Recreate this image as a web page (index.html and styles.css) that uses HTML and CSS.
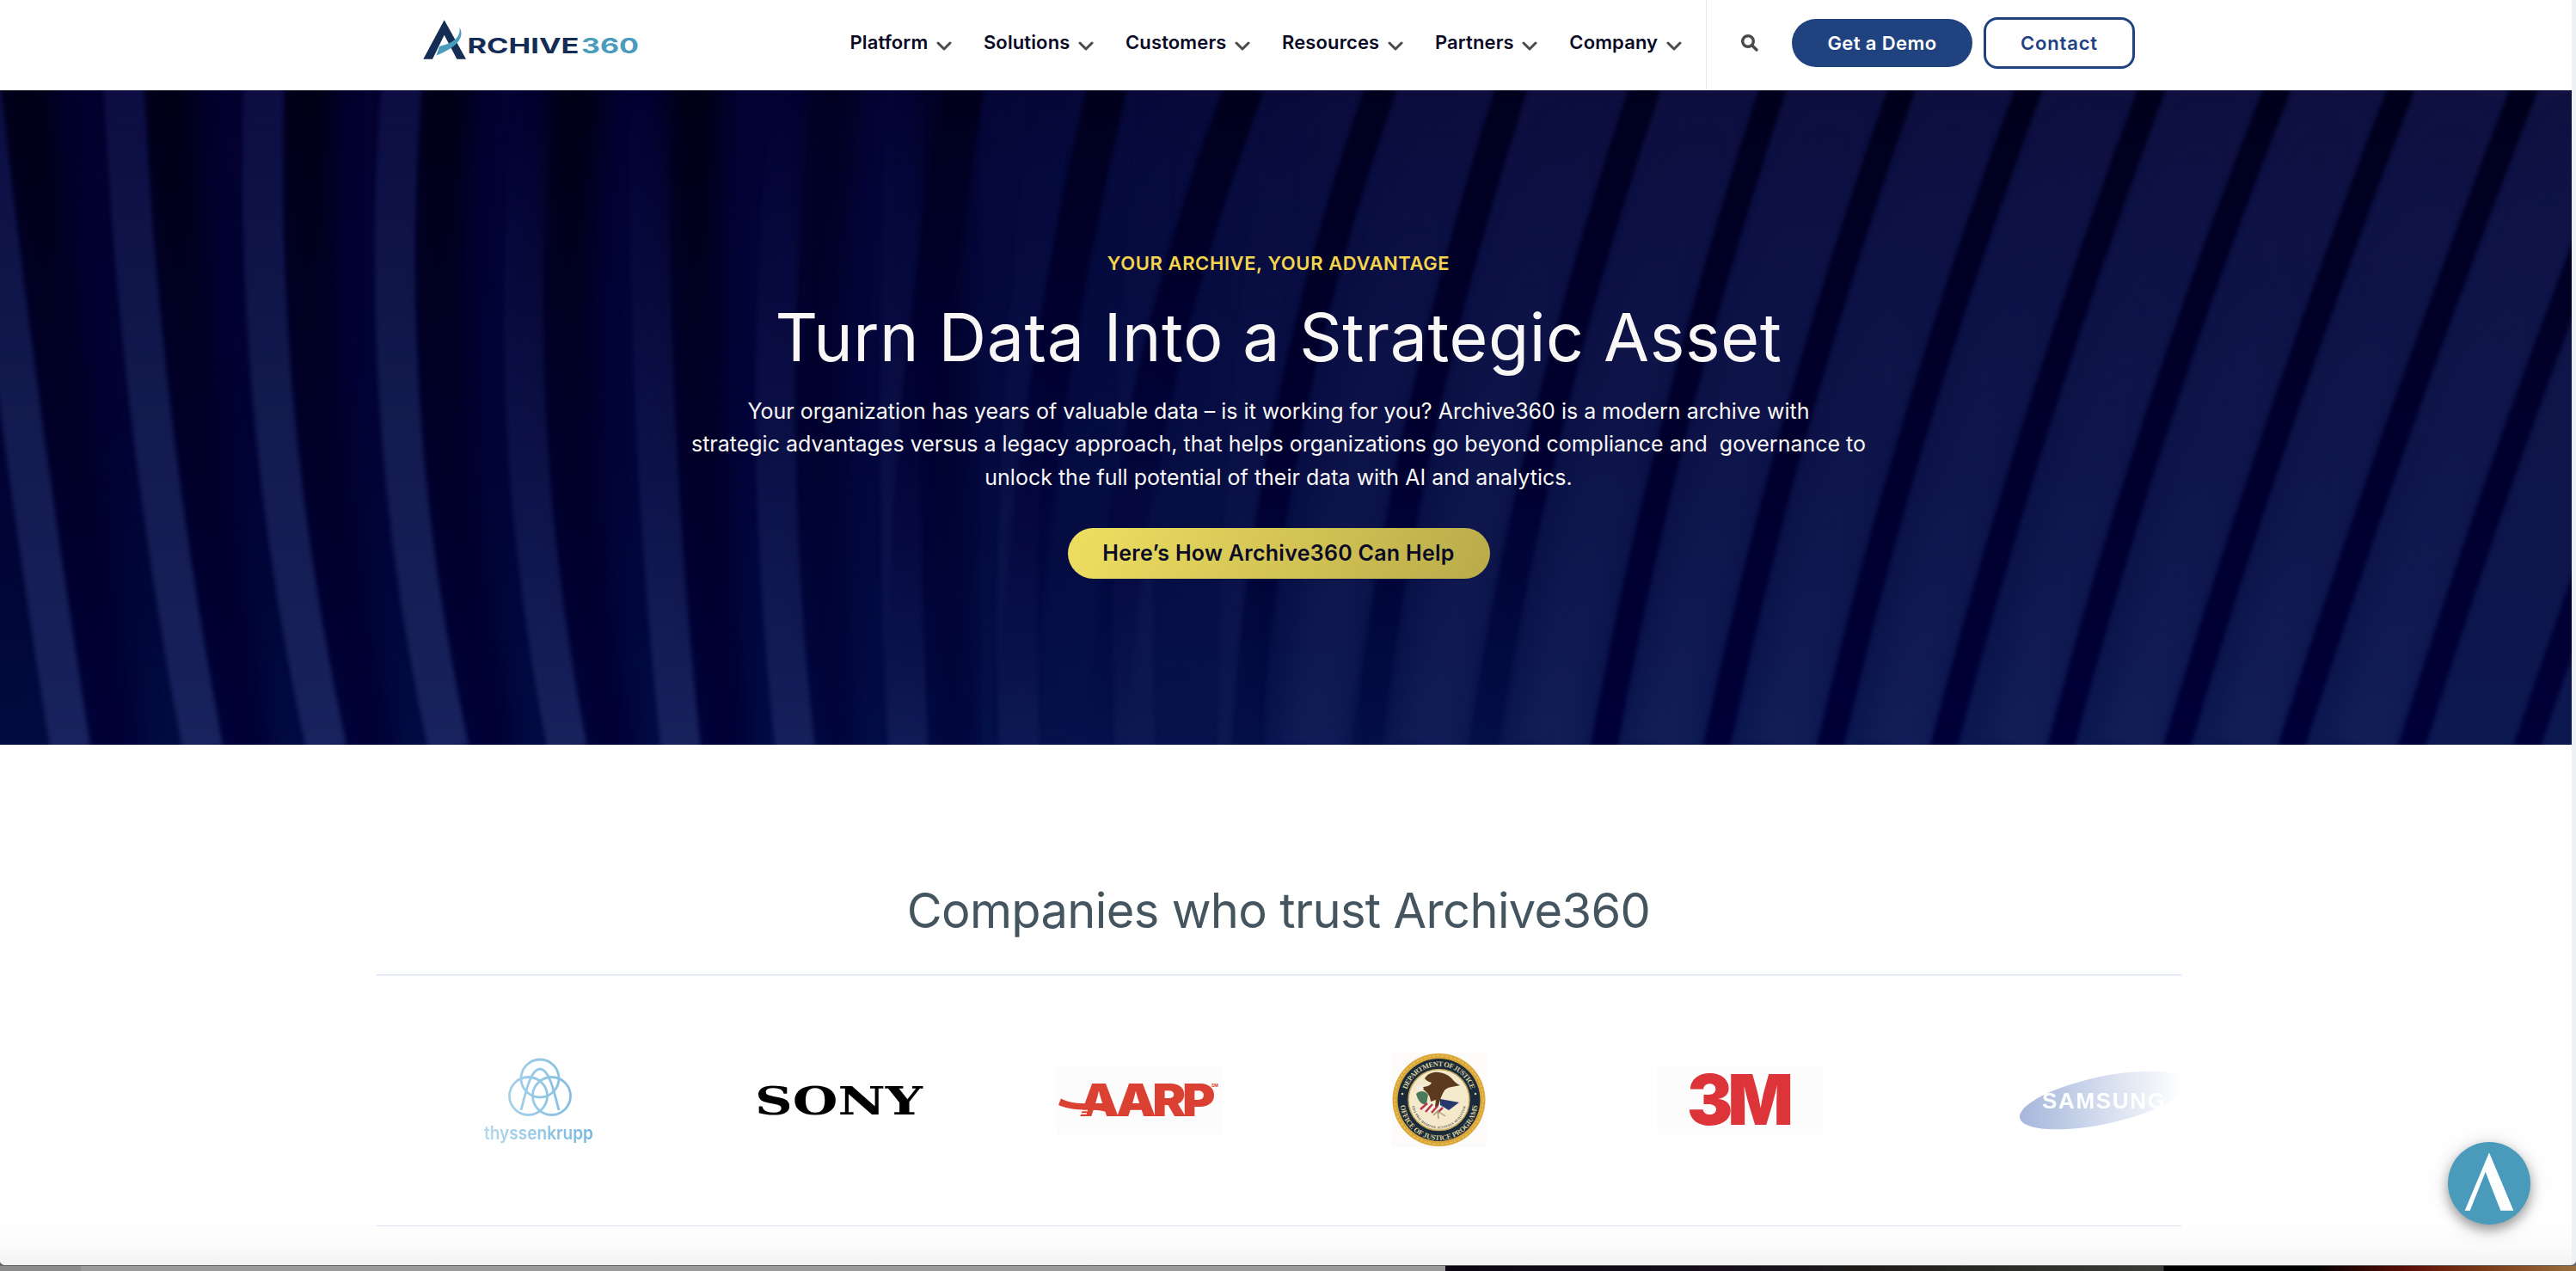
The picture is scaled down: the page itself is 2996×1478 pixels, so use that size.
FILE: index.html
```html
<!DOCTYPE html>
<html lang="en">
<head>
<meta charset="utf-8">
<title>Archive360</title>
<link rel="stylesheet" href="styles.css">
</head>
<body>
<div class="window">
  <div class="page">
    <header class="header">
      <svg class="brand" viewBox="492 20 252 52" width="252" height="52" role="img" aria-label="Archive360">
        <path d="M516.7 23.3 L542 68.8 H531.4 L516.7 40.7 L503 68.8 H492.3 Z" fill="#152c54"/>
        <path d="M534.5 32 C540 41 535 54 507.5 64.5 L511 54 C525 50.500 536 45 534.500 32 Z" fill="#4a9cbc"/>
        <text class="brand-text" x="543.500" y="62" textLength="130" lengthAdjust="spacingAndGlyphs" fill="#152c54">RCHIVE</text>
        <text class="brand-text" x="676" y="62" textLength="67" lengthAdjust="spacingAndGlyphs" fill="#4a9cbc">360</text>
      </svg>
      <nav class="nav">
        <a class="nav-item">Platform<svg class="chevron" viewBox="0 0 18 11"><path d="M2 2 L9 9 L16 2"/></svg></a>
        <a class="nav-item">Solutions<svg class="chevron" viewBox="0 0 18 11"><path d="M2 2 L9 9 L16 2"/></svg></a>
        <a class="nav-item">Customers<svg class="chevron" viewBox="0 0 18 11"><path d="M2 2 L9 9 L16 2"/></svg></a>
        <a class="nav-item">Resources<svg class="chevron" viewBox="0 0 18 11"><path d="M2 2 L9 9 L16 2"/></svg></a>
        <a class="nav-item">Partners<svg class="chevron" viewBox="0 0 18 11"><path d="M2 2 L9 9 L16 2"/></svg></a>
        <a class="nav-item">Company<svg class="chevron" viewBox="0 0 18 11"><path d="M2 2 L9 9 L16 2"/></svg></a>
      </nav>
      <div class="actions">
        <svg class="search" viewBox="0 0 20 20"><circle cx="8" cy="8" r="6.300"/><path d="M12.500 12.500 L18 18"/></svg>
        <a class="btn btn-demo">Get a Demo</a>
        <a class="btn btn-contact">Contact</a>
      </div>
    </header>

    <section class="hero">
      <svg class="hero-art" viewBox="0 0 2991 761" preserveAspectRatio="none" aria-hidden="true">
        <defs>
          <linearGradient id="base"><stop offset="0" stop-color="#010030"/><stop offset=".3" stop-color="#020238"/><stop offset=".42" stop-color="#050a40"/><stop offset=".58" stop-color="#0d1146"/><stop offset="1" stop-color="#11154a"/></linearGradient>
          <linearGradient id="shade" x2="0" y2="1"><stop offset="0" stop-color="#08001a" stop-opacity=".2"/><stop offset=".45" stop-color="#001040" stop-opacity=".1"/><stop offset="1" stop-color="#04205e" stop-opacity=".35"/></linearGradient>
          <linearGradient id="lit" gradientUnits="userSpaceOnUse" x1="0" y1="0" x2="0" y2="761"><stop offset="0" stop-color="#0c0d42"/><stop offset=".45" stop-color="#12194d"/><stop offset="1" stop-color="#18225c"/></linearGradient>
          <linearGradient id="litlow" gradientUnits="userSpaceOnUse" x1="0" y1="0" x2="0" y2="761"><stop offset="0" stop-color="#10124a" stop-opacity="0"/><stop offset=".4" stop-color="#12184e" stop-opacity=".5"/><stop offset="1" stop-color="#18225c"/></linearGradient>
          <linearGradient id="dark" gradientUnits="userSpaceOnUse" x1="0" y1="0" x2="0" y2="761"><stop offset="0" stop-color="#000016"/><stop offset=".5" stop-color="#000026"/><stop offset="1" stop-color="#000036"/></linearGradient>
          <linearGradient id="darktop" gradientUnits="userSpaceOnUse" x1="0" y1="0" x2="0" y2="761"><stop offset="0" stop-color="#00001c"/><stop offset=".4" stop-color="#000030" stop-opacity=".9"/><stop offset=".75" stop-color="#000038" stop-opacity=".35"/><stop offset="1" stop-color="#000038" stop-opacity="0"/></linearGradient>
          <linearGradient id="band" gradientUnits="userSpaceOnUse" x1="0" y1="0" x2="0" y2="761"><stop offset="0" stop-color="#00001c"/><stop offset=".5" stop-color="#00002c"/><stop offset="1" stop-color="#000038"/></linearGradient>
          <linearGradient id="bandfade" gradientUnits="userSpaceOnUse" x1="0" y1="0" x2="0" y2="761"><stop offset="0" stop-color="#00001e"/><stop offset=".6" stop-color="#000032"/><stop offset="1" stop-color="#000a40" stop-opacity=".6"/></linearGradient>
          <filter id="soft" x="-20%" width="140%" color-interpolation-filters="sRGB"><feGaussianBlur stdDeviation="14 2"/></filter>
          <filter id="edge" x="-20%" width="140%" color-interpolation-filters="sRGB"><feGaussianBlur stdDeviation="2.500"/></filter>
        </defs>
        <rect width="2991" height="761" fill="url(#base)"/>
        <rect width="2991" height="761" fill="url(#shade)"/>
        <g fill="none" stroke="url(#dark)" stroke-width="62" filter="url(#soft)">
          <path d="M28 -5 Q71 380 133 766"/><path d="M195 -5 Q213 380 287 766"/><path d="M358 -5 Q345 380 431 766"/><path d="M518 -5 Q488 380 573 766"/><path d="M672 -5 Q633 380 711 766"/><path d="M808 -5 Q800 380 843 766"/>
        </g>
        <g fill="none" stroke="url(#dark)" stroke-width="56" opacity=".6" filter="url(#soft)"><path d="M972 -5 Q928 380 975 766"/><path d="M1100 -5 Q1090 380 1110 766"/></g>
        <g fill="none" stroke="url(#lit)" stroke-width="47" filter="url(#edge)">
          <path d="M-23 -5 Q20 380 82 766"/><path d="M144 -5 Q162 380 236 766"/><path d="M307 -5 Q295 380 380 766"/><path d="M467 -5 Q437 380 522 766"/>
        </g>
        <g fill="none" stroke="url(#litlow)" stroke-width="46" filter="url(#edge)">
          <path d="M622 -5 Q583 380 660 766"/><path d="M757 -5 Q750 380 792 766"/><path d="M922 -5 Q880 380 925 766" opacity=".9"/><path d="M1055 -5 Q1039 380 1056 766" opacity=".7"/><path d="M1225 -5 Q1175 380 1185 766" opacity=".55"/><path d="M1350 -5 Q1310 380 1320 766" opacity=".45"/><path d="M1500 -5 Q1440 380 1440 766" opacity=".35"/>
        </g>
        <g fill="none" stroke="url(#litlow)" stroke-width="70" opacity=".6" filter="url(#soft)">
          <path d="M1694 0 Q1570 380 1526 761"/><path d="M1846 0 Q1722 380 1663 761"/><path d="M1996 0 Q1868 380 1800 761"/><path d="M2142 0 Q2014 380 1933 761"/><path d="M2290 0 Q2152 380 2070 761"/><path d="M2438 0 Q2290 380 2206 761"/><path d="M2583 0 Q2438 380 2344 761"/><path d="M2728 0 Q2576 380 2476 761"/><path d="M2870 0 Q2720 380 2610 761"/><path d="M3015 0 Q2864 380 2746 761"/>
        </g>
        <g fill="none" stroke="url(#darktop)" stroke-width="46" filter="url(#edge)">
          <path d="M1122 -5 Q1054 380 1050 766"/><path d="M1288 -5 Q1196 380 1180 766"/><path d="M1448 -5 Q1301 380 1290 766"/>
        </g>
        <g fill="none" stroke="url(#bandfade)" stroke-width="36" filter="url(#edge)">
          <path d="M1607 -5 Q1471 380 1450 766"/><path d="M1759 -5 Q1634 380 1590 766"/><path d="M1914 -5 Q1784 380 1725 766"/>
        </g>
        <g fill="none" stroke="url(#band)" stroke-width="31" filter="url(#edge)">
          <path d="M2063 -5 Q1936 380 1865 766"/><path d="M2213 -5 Q2077 380 1996 766"/><path d="M2361 -5 Q2217 380 2128 766"/><path d="M2504 -5 Q2360 380 2260 766"/><path d="M2650 -5 Q2497 380 2396 766"/><path d="M2794 -5 Q2645 380 2531 766"/><path d="M2937 -5 Q2787 380 2664 766"/><path d="M3080 -5 Q2924 380 2804 766"/><path d="M3226 -5 Q3068 380 2938 766"/>
        </g>
      </svg>
      <div class="hero-copy">
        <p class="eyebrow">YOUR ARCHIVE, YOUR ADVANTAGE</p>
        <h1 class="hero-title">Turn Data Into a Strategic Asset</h1>
        <p class="hero-text">Your organization has years of valuable data – is it working for you? Archive360 is a modern archive with<br>strategic advantages versus a legacy approach, that helps organizations go beyond compliance and&nbsp; governance to<br>unlock the full potential of their data with AI and analytics.</p>
        <a class="hero-cta">Here’s How Archive360 Can Help</a>
      </div>
    </section>

    <section class="trust">
      <h2 class="trust-title">Companies who trust Archive360</h2>
      <div class="logos">
        <div class="slide">
          <svg viewBox="557 1226 140 110" width="140" height="110" role="img">
            <g fill="none" stroke="#2f90cc" stroke-width="2.800"><circle cx="628" cy="1254" r="22"/><circle cx="614.500" cy="1274.500" r="22"/><circle cx="641.500" cy="1274.500" r="22"/><path d="M606 1291 C611 1272 617 1243 628 1243 C639 1243 645 1272 650 1291"/></g>
            <text class="thyssen" x="563" y="1325" textLength="127" lengthAdjust="spacingAndGlyphs">thyssenkrupp</text>
          </svg>
        </div>
        <div class="slide">
          <svg viewBox="871 1240 210 77" width="210" height="77" role="img"><text class="sony" x="878" y="1294.500" textLength="195" lengthAdjust="spacingAndGlyphs">SONY</text></svg>
        </div>
        <div class="slide">
          <svg viewBox="1230 1239 192 80" width="192" height="80" role="img">
            <rect x="1230" y="1239" width="192" height="80" fill="#fdfcfc"/>
            <text class="aarp" x="1256" y="1298" textLength="154" lengthAdjust="spacingAndGlyphs">AARP</text>
            <path d="M1235 1277.500 C1247 1284 1262 1283 1276 1284 C1284 1285 1289 1288 1291 1294 C1282 1291 1276 1290 1266 1290.500 C1250 1291 1239 1288 1232 1285 Z" fill="#db4132"/>
            <path d="M1250 1291.500 H1266 M1249 1295 H1265" stroke="#fdfcfc" stroke-width="1.500"/>
            <text class="aarp-mark" x="1410" y="1264">SM</text>
          </svg>
        </div>
        <div class="slide">
          <svg viewBox="1620 1224 110 110" width="110" height="110" role="img">
            <defs>
              <path id="arcTop" d="M1635.500 1279 A39 39 0 0 1 1713.500 1279"/>
              <path id="arcBottom" d="M1629.500 1281 A45 45 0 0 0 1719.500 1281"/>
              <path id="arcInner" d="M1643 1281 A31.500 31.500 0 0 0 1706 1281"/>
            </defs>
            <rect x="1620" y="1224" width="110" height="110" fill="#fcfbfa"/>
            <circle cx="1674.500" cy="1279" r="54" fill="#d9a63a"/>
            <circle cx="1674.500" cy="1279" r="51.500" fill="none" stroke="#e6bb50" stroke-width="2" stroke-dasharray="3 2"/>
            <circle cx="1674.500" cy="1279" r="48" fill="#1b2a3a"/>
            <circle cx="1674.500" cy="1279" r="35.500" fill="#f5e9cb" stroke="#c3a85a" stroke-width="1.500"/>
            <text class="seal-text"><textPath href="#arcTop" startOffset="50%" text-anchor="middle" textLength="98">DEPARTMENT OF JUSTICE</textPath></text>
            <text class="seal-text"><textPath href="#arcBottom" startOffset="50%" text-anchor="middle" textLength="132">OFFICE OF JUSTICE PROGRAMS</textPath></text>
            <text class="seal-motto"><textPath href="#arcInner" startOffset="50%" text-anchor="middle" textLength="88">QUI PRO DOMINA JUSTITIA SEQUITUR</textPath></text>
            <circle cx="1632" cy="1272" r="1.300" fill="#d9cf9c"/><circle cx="1717" cy="1272" r="1.300" fill="#d9cf9c"/>
            <path d="M1648 1272 C1652 1268 1658 1268 1662 1273 L1660 1284 C1654 1285 1650 1280 1648 1272Z" fill="#4a7a5c"/>
            <path d="M1651 1286 L1668 1282 L1684 1288 L1678 1293 L1660 1294 Z" fill="#f4efe8"/>
            <path d="M1653 1290 L1661 1283 M1659 1293 L1667 1284 M1666 1294 L1673 1286 M1673 1294 L1679 1288" stroke="#b63b42" stroke-width="2.600"/>
            <path d="M1676 1278 L1698 1282 L1686 1291 L1676 1285 Z" fill="#27386f"/>
            <path d="M1658 1254 C1664 1244 1677 1246 1684 1250 C1690 1253 1692 1259 1699 1262 C1691 1264 1684 1264 1681 1268 C1678 1273 1676 1278 1674 1286 L1670 1287 L1671 1279 L1665 1281 C1664 1272 1660 1270 1654 1265 C1658 1263 1664 1264 1666 1259 C1663 1258 1660 1257 1658 1254 Z" fill="#5b3a1e"/>
            <path d="M1648 1264 L1655 1262 L1657 1266 L1651 1269 Z" fill="#f2efe9"/>
            <path d="M1668 1297 L1673 1292 L1674 1301 M1673 1292 L1682 1298" fill="none" stroke="#a89a7a" stroke-width="1.500"/>
          </svg>
        </div>
        <div class="slide">
          <svg viewBox="1927 1229 193 100" width="193" height="100" role="img">
            <rect x="1927" y="1239" width="193" height="80" fill="#fdfcfc"/>
            <text class="mmm" x="1962" y="1308" textLength="118" lengthAdjust="spacingAndGlyphs">3M</text>
          </svg>
        </div>
        <div class="slide slide-last">
          <svg viewBox="2343 1239 204 80" width="204" height="80" role="img">
            <ellipse cx="2446" cy="1279.500" rx="99" ry="27.500" transform="rotate(-12 2446 1279.500)" fill="#4a6db8"/>
            <text class="samsung" x="2375" y="1289" textLength="143" lengthAdjust="spacing">SAMSUNG</text>
          </svg>
        </div>
      </div>
    </section>
    <a class="chat" aria-label="Chat">
      <svg viewBox="2847 1328 96 96" width="96" height="96"><path d="M2895 1340.300 L2923.300 1407.700 H2908.300 L2890.700 1362.700 L2872.700 1407.700 H2866.700 Z" fill="#fff"/></svg>
    </a>
  </div>
  <div class="scrollbar"></div>
</div>
<div class="desktop"></div>
</body>
</html>
```
FILE: styles.css
```css
* { box-sizing: border-box; }

body {
  margin: 0;
  height: 1478px;
  display: flex;
  flex-direction: column;
  overflow: hidden;
  background: #666;
  font-family: Inter, "Liberation Sans", sans-serif;
}

h1, h2, p { margin: 0; font-weight: 400; }

.window {
  display: flex;
  height: 1472px;
  overflow: hidden;
  border-radius: 0 0 6px 6px;
  border-bottom: 1px solid #6d6d6d;
}

.page {
  position: relative;
  flex: 1;
  display: flex;
  flex-direction: column;
  background: #fff;
}

.scrollbar { width: 5px; background: #eef0f4; }

.desktop {
  flex: 1;
  background: linear-gradient(90deg, #8b8b8b 0 94px, #9a9a9a 94px 1681px, #0a0712 1681px, #150d1c 2000px, #1b1a19 2150px, #3b3b38 2516px, #000 2517px, #000 2690px, #5c0e06 2800px, #7a3a18 2890px, #9a6e3c 2996px);
}

/* Header */
.header {
  display: flex;
  align-items: center;
  height: 105px;
  padding: 0 508px 5px 492px;
  color: #0b0a26;
  font-size: 22px;
  font-weight: 600;
}

.brand { margin-bottom: 8px; }
.brand-text { font: 700 24.5px Inter, sans-serif; }

.nav { display: flex; gap: 37.1px; margin-left: 244.5px; letter-spacing: .12px; }
.nav-item {
  display: flex;
  align-items: center;
  gap: 9.5px;
  line-height: 28px;
  padding-bottom: 2px;
}

.chevron {
  width: 18px;
  height: 11px;
  margin-top: 8px;
  fill: none;
  stroke: #4a4a4a;
  stroke-width: 3;
  stroke-linecap: round;
  stroke-linejoin: round;
}

.actions {
  display: flex;
  align-items: center;
  height: 105px;
  margin: 0 0 -5px auto;
  padding: 0 0 5px 40px;
  border-left: 1px solid #e9e9ec;
}

.search {
  width: 20px;
  height: 20px;
  margin-right: 39px;
  fill: none;
  stroke: #4a4a4a;
  stroke-width: 3.4;
  stroke-linecap: round;
}

.btn { display: flex; align-items: center; justify-content: center; padding-bottom: 1px; }
.btn-demo {
  width: 210px;
  height: 56px;
  margin-right: 13px;
  border-radius: 28px;
  background: #20427f;
  color: #fff;
  letter-spacing: .4px;
}
.btn-contact {
  width: 176px;
  height: 60px;
  border: 3px solid #20427f;
  border-radius: 16px;
  color: #20427f;
  letter-spacing: .8px;
}

/* Hero */
.hero {
  position: relative;
  height: 761px;
  padding: 186px 17px 0 0;
  overflow: hidden;
  background: #05083a;
}

.hero-art { position: absolute; top: 0; left: 0; width: 100%; height: 100%; }

.hero-copy {
  position: relative;
  display: flex;
  flex-direction: column;
  align-items: center;
  color: #f9f7f5;
  text-align: center;
}

.eyebrow {
  color: #f4d54d;
  font-size: 22px;
  font-weight: 600;
  line-height: 30px;
  letter-spacing: .6px;
}

.hero-title { margin-top: 25px; font-size: 77px; line-height: 92px; letter-spacing: .6px; }

.hero-text { margin-top: 20.6px; font-size: 25px; line-height: 38.6px; white-space: nowrap; }

.hero-cta {
  display: flex;
  align-items: center;
  justify-content: center;
  width: 491px;
  height: 59px;
  margin-top: 39.6px;
  padding-bottom: 1px;
  border-radius: 30px;
  background: linear-gradient(115deg, #eedf62, #b9ab49);
  color: #0b0a26;
  font-size: 25px;
  font-weight: 600;
  letter-spacing: .28px;
}

/* Customer logos */
.trust {
  flex: 1;
  display: flex;
  flex-direction: column;
  align-items: center;
  padding: 158px 17px 0 0;
  background: linear-gradient(0deg, #f3f3f3, #fafafa 20px, #fff 50px);
}

.trust-title {
  color: #455560;
  font-size: 56px;
  line-height: 70px;
  letter-spacing: -.65px;
}

.logos {
  display: flex;
  width: 2099px;
  height: 293px;
  margin-top: 39px;
  padding-left: 14.5px;
  overflow: hidden;
  background: linear-gradient(#dbe4f7, #dbe4f7) top / 100% 1.5px no-repeat, linear-gradient(#dbe4f7, #dbe4f7) bottom / 100% 1.5px no-repeat;
}

.slide {
  flex: none;
  display: flex;
  align-items: center;
  justify-content: center;
  width: 349.2px;
  padding-bottom: 1px;
}
.slide:first-child {
  padding-top: 4px;
  -webkit-mask: linear-gradient(90deg, rgba(0,0,0,.1), #000 390px);
  mask: linear-gradient(90deg, rgba(0,0,0,.1), #000 390px);
}
.slide-last {
  margin-left: 72px;
  -webkit-mask: linear-gradient(90deg, rgba(0,0,0,.7), transparent 267px);
  mask: linear-gradient(90deg, rgba(0,0,0,.7), transparent 267px);
}

.thyssen { font: 600 21px Inter, sans-serif; fill: #2f90cc; }
.sony { font: 700 44px "DejaVu Serif", serif; fill: #000; }
.aarp { font: 900 52px Inter, sans-serif; fill: #db4132; letter-spacing: -4px; }
.aarp-mark { font: 700 5px Inter, sans-serif; fill: #db4132; }
.seal-text { font: 700 8.5px "Liberation Serif", serif; fill: #d9cf9c; }
.seal-motto { font: 700 4px "Liberation Serif", serif; fill: #5a5548; }
.mmm { font: 900 81px Inter, sans-serif; fill: #dc3438; letter-spacing: -6px; }
.samsung { font: 700 26px "Liberation Sans", sans-serif; fill: #fff; }

.chat {
  position: absolute;
  left: 2847px;
  top: 1328px;
  width: 96px;
  height: 96px;
  border-radius: 50%;
  background: #4a9abb;
  box-shadow: 0 6px 14px rgba(0,0,0,.38), 0 2px 30px rgba(0,0,0,.1);
}
```
